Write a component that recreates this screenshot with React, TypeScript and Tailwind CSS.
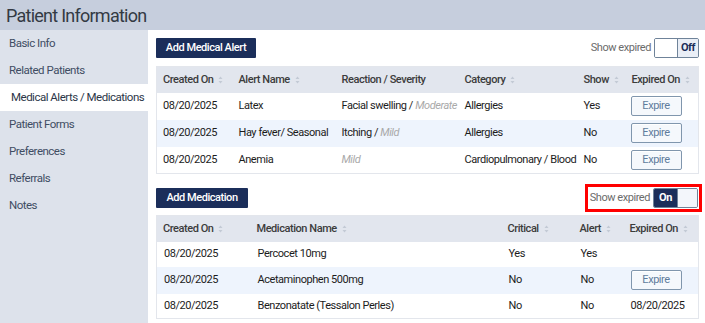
import React from 'react';

const navItems = [
  'Basic Info',
  'Related Patients',
  'Medical Alerts / Medications',
  'Patient Forms',
  'Preferences',
  'Referrals',
  'Notes',
];

const SortIcon = () => (
  <svg className="ml-[5px] inline-block" width="5" height="8" viewBox="0 0 5 8">
    <path d="M2.5 0.5 L4.5 3 L0.5 3 Z" fill="#c3cad5" />
    <path d="M2.5 7.5 L4.5 5 L0.5 5 Z" fill="#c3cad5" />
  </svg>
);

const Th = ({ label, w }: { label: string; w: string }) => (
  <th className={`${w} px-[6px] text-left font-medium text-[#3c3c3c] whitespace-nowrap`}>
    {label}
    <SortIcon />
  </th>
);

const ExpireBtn = () => (
  <button className="h-[20px] w-[51px] border border-[#8096ad] rounded-[2px] bg-[#f5f8fc] text-[#5f7c9c] text-[11px] shadow-[inset_0_1px_0_#fff]">
    Expire
  </button>
);

const Toggle = ({ on }: { on: boolean }) => (
  <div className="flex items-center">
    <span className="text-[11px] text-[#6b6b6b] mr-[3px]">Show expired</span>
    <div className="flex h-[20px] w-[45px] border border-[#6f8399] rounded-[2px] overflow-hidden">
      {on ? (
        <>
          <div className="w-[23px] bg-[#1b2e5a] text-white font-bold text-[11px] flex items-center justify-center">On</div>
          <div className="flex-1 bg-[#f3f6fb] border-l border-[#6f8399]" />
        </>
      ) : (
        <>
          <div className="w-[23px] bg-white border-r border-[#6f8399]" />
          <div className="flex-1 bg-[#e9eef6] text-[#1b2e5a] font-bold text-[11px] flex items-center justify-center">Off</div>
        </>
      )}
    </div>
  </div>
);

const alerts = [
  { name: 'Latex', reaction: 'Facial swelling', severity: 'Moderate', category: 'Allergies', show: 'Yes' },
  { name: 'Hay fever/ Seasonal', reaction: 'Itching', severity: 'Mild', category: 'Allergies', show: 'No' },
  { name: 'Anemia', reaction: '', severity: 'Mild', category: 'Cardiopulmonary / Blood', show: 'No' },
];

const meds = [
  { name: 'Percocet 10mg', critical: 'Yes', alert: 'Yes', expired: null as string | null, btn: false },
  { name: 'Acetaminophen 500mg', critical: 'No', alert: 'No', expired: null, btn: true },
  { name: 'Benzonatate (Tessalon Perles)', critical: 'No', alert: 'No', expired: '08/20/2025', btn: false },
];

export default function App() {
  return (
    <div className="w-[705px] h-[323px] overflow-hidden bg-white font-['Roboto',sans-serif] text-[#1c1c1c]">
      <div className="h-[30px] bg-[#c6cedd] flex items-center px-[6px]">
        <h1 className="text-[18px] tracking-[-0.75px] text-[#333a44]">Patient Information</h1>
      </div>
      <div className="flex h-[293px]">
        <nav className="w-[148px] shrink-0 bg-[#dde2eb] flex flex-col">
          {navItems.map((item) => {
            const active = item === 'Medical Alerts / Medications';
            return (
              <div
                key={item}
                className={`h-[27px] flex items-center text-[11.5px] tracking-[-0.5px] whitespace-nowrap ${
                  active ? 'bg-white pl-[11px] text-[#2c3648]' : 'pl-[9px] text-[#3f4d63]'
                }`}
              >
                {item}
              </div>
            );
          })}
        </nav>

        <main className="flex-1 pl-[8px] pr-[7px] pt-[8px] text-[11px] tracking-[-0.45px]">
          <div className="flex items-center justify-between h-[20px]">
            <button className="h-[20px] w-[100px] bg-[#1b2e5a] text-white font-medium text-[11px] rounded-[1px]">
              Add Medical Alert
            </button>
            <Toggle on={false} />
          </div>

          <table className="mt-[8px] w-[542px] table-fixed border border-[#e3e6ec] border-collapse">
            <thead>
              <tr className="h-[26px] bg-[#e2e6ee]">
                <Th label="Created On" w="w-[76px]" />
                <Th label="Alert Name" w="w-[103px]" />
                <th className="w-[123px] px-[6px] text-left font-medium text-[#3c3c3c]">Reaction / Severity</th>
                <Th label="Category" w="w-[119px]" />
                <Th label="Show" w="w-[48px]" />
                <Th label="Expired On" w="w-[73px]" />
              </tr>
            </thead>
            <tbody>
              {alerts.map((a, i) => (
                <tr key={a.name} className={`h-[27px] ${i === 1 ? 'bg-[#eef4fd]' : 'bg-white'}`}>
                  <td className="px-[6px]">08/20/2025</td>
                  <td className="px-[6px] whitespace-nowrap">{a.name}</td>
                  <td className="px-[6px] whitespace-nowrap">
                    {a.reaction && <>{a.reaction} / </>}
                    <span className="italic text-[#a9a9a9]">{a.severity}</span>
                  </td>
                  <td className="px-[6px] whitespace-nowrap">{a.category}</td>
                  <td className="px-[6px]">{a.show}</td>
                  <td className="px-[5px]">
                    <ExpireBtn />
                  </td>
                </tr>
              ))}
            </tbody>
          </table>

          <div className="mt-[10px] flex items-center justify-between h-[28px]">
            <button className="h-[20px] w-[92px] bg-[#1b2e5a] text-white font-medium text-[11px] rounded-[1px]">
              Add Medication
            </button>
            <div className="border-[3px] border-[#ff0000] h-[28px] pl-[2px] pr-[1px] -mr-[3px] flex items-center">
              <Toggle on={true} />
            </div>
          </div>

          <table className="mt-[3px] w-[542px] table-fixed border border-[#e3e6ec] border-collapse">
            <thead>
              <tr className="h-[26px] bg-[#e2e6ee]">
                <Th label="Created On" w="w-[94px]" />
                <Th label="Medication Name" w="w-[251px]" />
                <Th label="Critical" w="w-[72px]" />
                <Th label="Alert" w="w-[50px]" />
                <Th label="Expired On" w="w-[75px]" />
              </tr>
            </thead>
            <tbody>
              {meds.map((m, i) => (
                <tr key={m.name} className={`${m.btn ? 'h-[27px]' : 'h-[25px]'} ${i === 1 ? 'bg-[#eef4fd]' : 'bg-white'}`}>
                  <td className="px-[7px]">08/20/2025</td>
                  <td className="px-[7px] whitespace-nowrap">{m.name}</td>
                  <td className="px-[7px]">{m.critical}</td>
                  <td className="px-[7px]">{m.alert}</td>
                  <td className="px-[7px]">
                    {m.btn ? <ExpireBtn /> : m.expired}
                  </td>
                </tr>
              ))}
            </tbody>
          </table>
        </main>
      </div>
    </div>
  );
}
